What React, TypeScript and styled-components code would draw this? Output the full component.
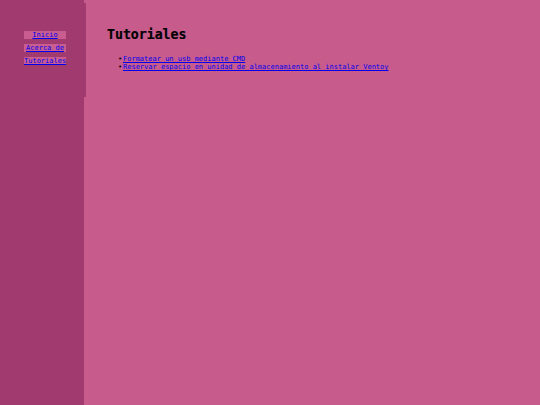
import React from "react";
import styled, { createGlobalStyle } from "styled-components";

const GlobalStyle = createGlobalStyle`
  html, body {
    margin: 0;
    padding: 0;
    height: 100%;
    background: #c65b8c;
    font-family: "DejaVu Sans Mono", "Liberation Mono", monospace;
  }
  #root {
    height: 100%;
  }
`;

const Page = styled.div`
  display: flex;
  min-height: 405px;
  height: 100%;
`;

const Sidebar = styled.aside`
  width: 84px;
  flex-shrink: 0;
  background: #a13b6f;
`;

const NavPanel = styled.nav`
  width: 86px;
  height: 94px;
  margin-top: 3px;
  background: #a13b6f;
  display: flex;
  flex-direction: column;
  align-items: center;
  gap: 5px;
  padding: 28px 0 0 4px;
  box-sizing: border-box;
`;

const NavLink = styled.a`
  display: block;
  width: 42px;
  text-align: center;
  font-size: 7px;
  line-height: 8px;
  background: #c95d8f;
  color: #0000ee;
  text-decoration: underline;
`;

const Main = styled.main`
  flex: 1;
  padding: 26px 23px;
`;

const Title = styled.h1`
  margin: 0 0 11px;
  font-size: 13.2px;
  line-height: 18px;
  font-weight: bold;
  color: #000;
  -webkit-text-stroke: 0.2px #000;
`;

const List = styled.ul`
  margin: 0;
  padding-left: 16px;
  list-style: none;
  font-size: 7px;
  line-height: 8px;
`;

const Item = styled.li`
  display: flex;

  &::before {
    content: "•";
    width: 5px;
    margin-left: -5px;
    color: #000;
  }
`;

const ItemLink = styled.a`
  color: #0000ee;
  text-decoration: underline;
`;

export default function App() {
  return (
    <>
      <GlobalStyle />
      <Page>
        <Sidebar>
          <NavPanel>
            <NavLink href="#">Inicio</NavLink>
            <NavLink href="#">Acerca de</NavLink>
            <NavLink href="#">Tutoriales</NavLink>
          </NavPanel>
        </Sidebar>
        <Main>
          <Title>Tutoriales</Title>
          <List>
            <Item>
              <ItemLink href="#">Formatear un usb mediante CMD</ItemLink>
            </Item>
            <Item>
              <ItemLink href="#">
                Reservar espacio en unidad de almacenamiento al instalar Ventoy
              </ItemLink>
            </Item>
          </List>
        </Main>
      </Page>
    </>
  );
}
